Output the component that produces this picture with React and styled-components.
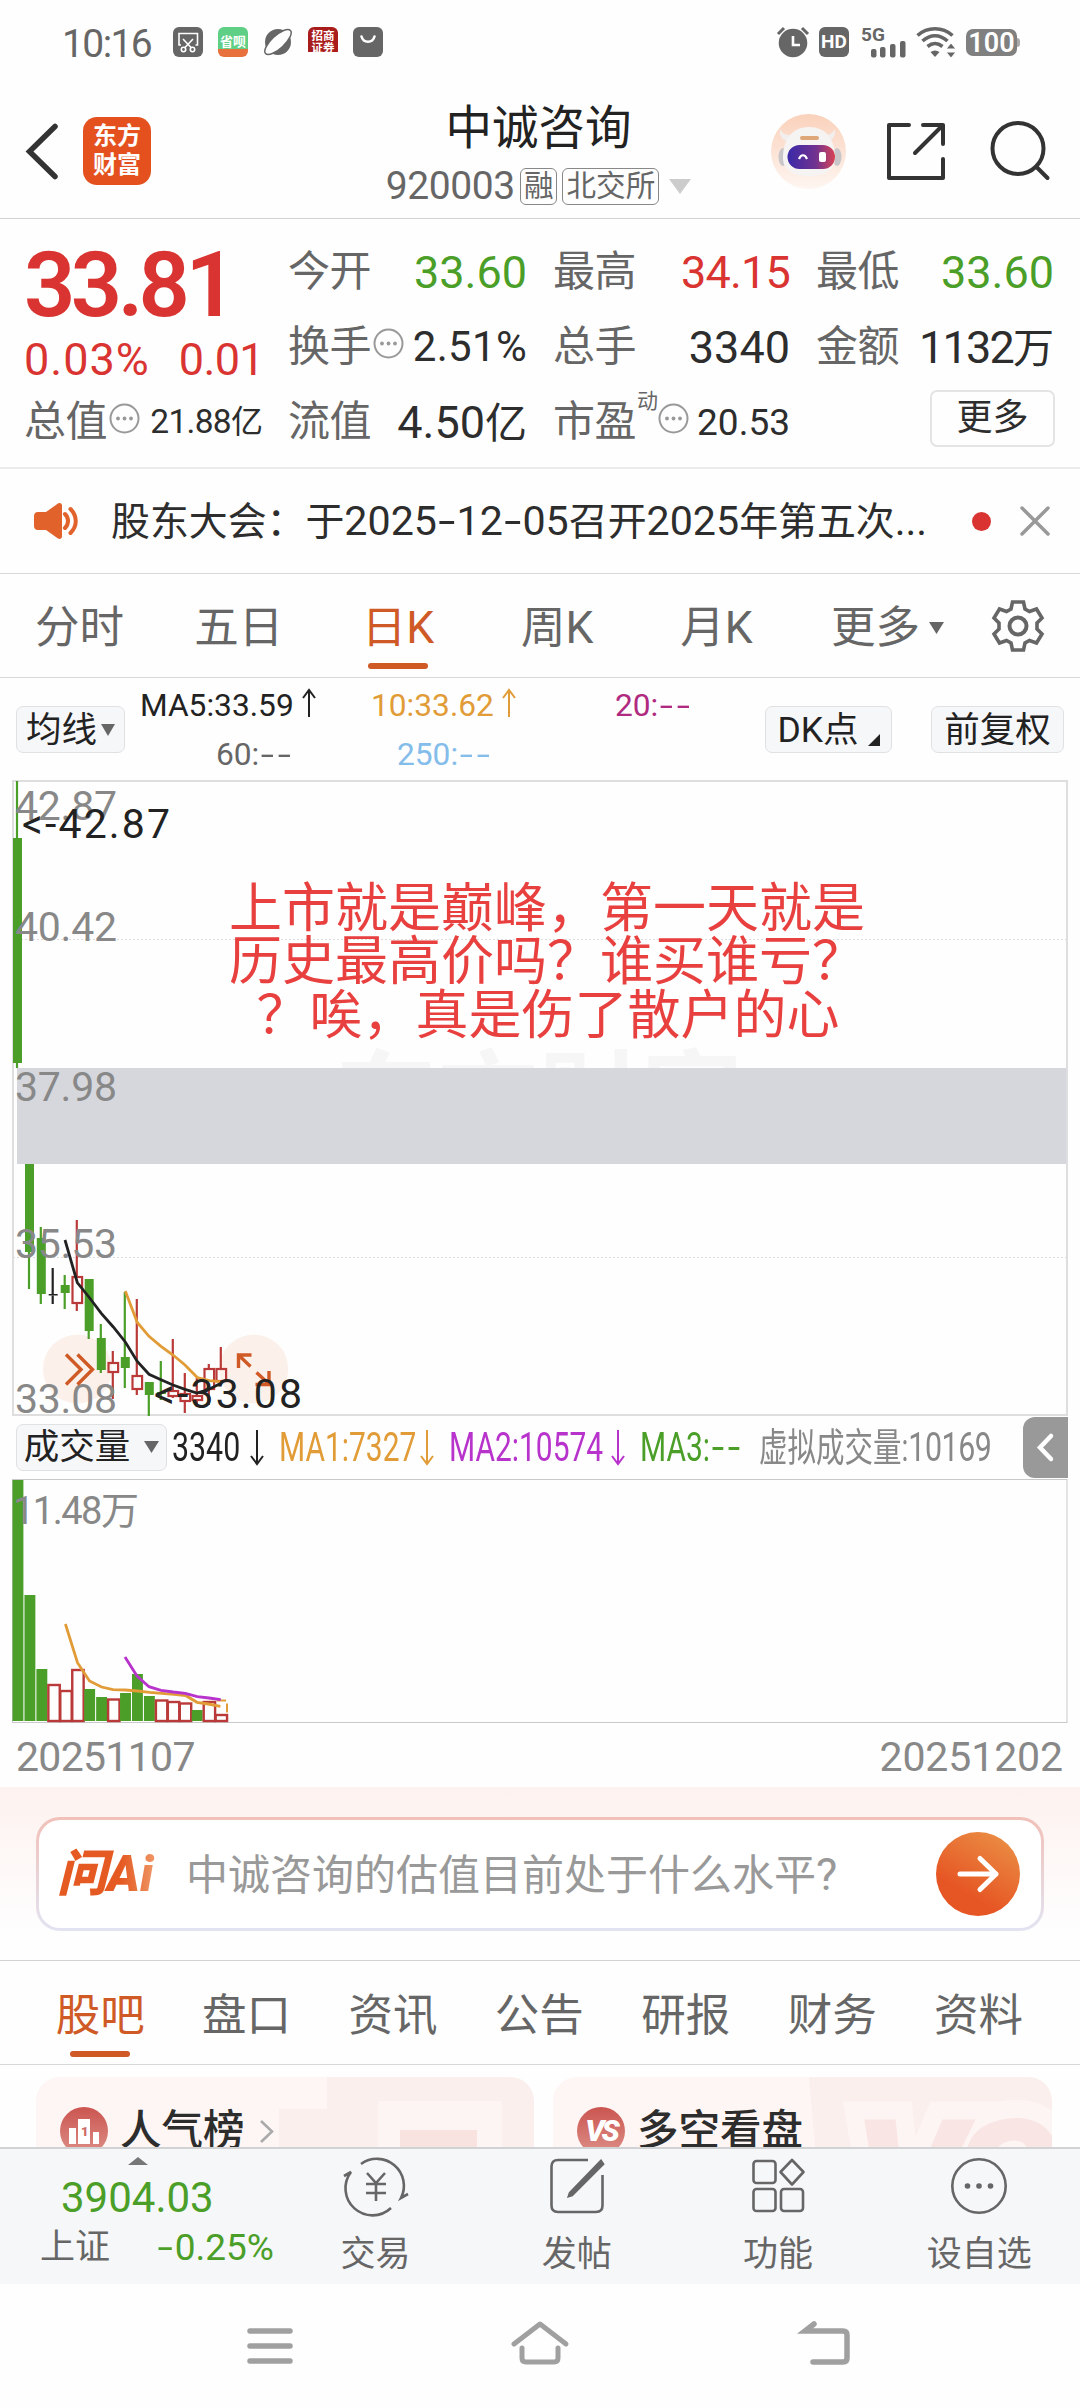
import React from 'react';
import styled, {createGlobalStyle} from 'styled-components';

const GREEN = '#4b9f28';
const RED = '#d93431';
const CANDLE_RED = '#b93a38';
const ORANGE = '#cf5a26';
const YELLOW = '#e19c37';

const GlobalStyle = createGlobalStyle`
  * {
    box-sizing: border-box;
  }
  body {
    margin: 0;
    background: #fefefe;
    color: #2d2d2d;
    font-family: Roboto, 'Noto Sans CJK SC', sans-serif;
  }
`;

const Page = styled.div`
  width: 1080px;
  height: 2408px;
  display: flex;
  flex-direction: column;
  overflow: hidden;
  line-height: 1;
  white-space: nowrap;
`;

const Icon = styled.svg`
  display: block;
  flex: none;
  overflow: visible;
  fill: none;
  margin-left: ${p => p.$left || 0}px;
  margin-top: ${p => p.$top || 0}px;
`;

/* text with its own size, tracking and colour */
const Text = styled.span`
  font-size: ${p => p.$size}px;
  letter-spacing: ${p => p.$track || 0}px;
  color: ${p => p.$color || 'inherit'};
`;

/* wide hyphen of the number font */
const Dash = styled.span`
  display: inline-block;
  margin: 0 ${p => p.$gap || 0.13}em;
  transform: scaleX(1.5);
`;

/* ---------- status bar ---------- */

const StatusBar = styled.div`
  flex: 0 0 84px;
  padding: 0 60px 0 62px;
  display: flex;
  align-items: center;
  justify-content: space-between;
  color: #666;
`;

const StatusGroup = styled.div`
  display: flex;
  align-items: center;
  gap: ${p => p.$gap}px;
`;

const Clock = styled.div`
  width: 96px;
  font-size: 39px;
  letter-spacing: -1.6px;
  padding-top: 4px;
`;

const AppBadge = styled.div`
  width: 30px;
  height: 30px;
  border-radius: 6px;
  overflow: hidden;
  background: ${p => p.$bg};
  color: #fff;
  display: flex;
  flex-direction: column;
  align-items: center;
  justify-content: center;
  font-size: ${p => p.$size}px;
  line-height: 12px;
  font-weight: 700;
`;

const Battery = styled.div`
  width: 51px;
  height: 27px;
  border-radius: 7px;
  background: #808080;
  color: #fff;
  font-size: 27px;
  font-weight: 600;
  line-height: 28px;
  text-align: center;
`;

const BatteryTip = styled.div`
  width: 3px;
  height: 9px;
  margin-left: -10px;
  border-radius: 0 3px 3px 0;
  background: #aaa;
`;

/* ---------- header ---------- */

const Header = styled.div`
  flex: 0 0 135px;
  padding: 0 30px 0 27px;
  display: grid;
  grid-template-columns: 280px 1fr 280px;
  border-bottom: 1px solid #d2d2d2;
`;

const HeaderLeft = styled.div`
  display: flex;
  align-items: flex-start;
  padding-top: 33px;
  gap: 25px;
`;

const Logo = styled.div`
  width: 68px;
  height: 68px;
  border-radius: 14px;
  background: #e4511f;
  color: #fff;
  font-size: 24px;
  line-height: 29px;
  font-weight: 700;
  text-align: center;
  padding-top: 5px;
`;

const HeaderTitle = styled.div`
  display: flex;
  flex-direction: column;
  align-items: center;
  padding-top: 19px;
`;

const StockName = styled.div`
  font-size: 46.5px;
  line-height: 50px;
  color: #222;
`;

const StockCode = styled.div`
  display: flex;
  align-items: center;
  height: 38px;
  margin-top: 14px;
  color: #666;
`;

const Tag = styled.div`
  height: 37px;
  padding: 0 3px;
  margin-left: 5px;
  border: 1px solid #888;
  border-radius: 6px;
  font-size: 29.6px;
  line-height: 34px;
`;

const HeaderRight = styled.div`
  display: flex;
  justify-content: flex-end;
  padding-top: 30px;
`;

/* ---------- quote ---------- */

const Quote = styled.div`
  flex: 0 0 250px;
  display: flex;
  padding: 18px 0 0 24px;
  border-bottom: 2px solid #ebebeb;
`;

const PriceColumn = styled.div`
  flex: 0 0 264px;
  display: flex;
  flex-direction: column;
`;

const Price = styled.div`
  height: 96px;
  padding-top: 3px;
  font-size: 90px;
  line-height: 91px;
  font-weight: 600;
  letter-spacing: -4.6px;
  color: ${RED};
`;

const Change = styled.div`
  height: 54px;
  display: flex;
  align-items: flex-start;
  padding-top: 4px;
  gap: 29px;
  color: ${RED};
`;

const StatGrid = styled.div`
  display: grid;
  grid-template-columns: 239px 237px 238px;
  grid-auto-rows: 75px;
  column-gap: 26px;
`;

const Stat = styled.div`
  height: 70px;
  display: flex;
  align-items: center;
  justify-content: space-between;
  width: ${p => p.$width || 'auto'};
`;

const StatLabel = styled.div`
  display: flex;
  align-items: center;
  gap: 2px;
  font-size: 42px;
  line-height: 50px;
  letter-spacing: -0.5px;
  color: #666;
`;

const Superscript = styled.span`
  align-self: flex-start;
  font-size: 21px;
  line-height: 22px;
  margin: -7px -2px 0 -1px;
`;

const MoreButton = styled.div`
  width: 125px;
  height: 57px;
  margin: 3px 0 0 114px;
  border: 2px solid #e4e4e4;
  border-radius: 7px;
  text-align: center;
  font-size: 36px;
  line-height: 53px;
`;

/* ---------- notice ---------- */

const Notice = styled.div`
  flex: 0 0 105px;
  display: flex;
  align-items: center;
  padding: 0 31px 0 34px;
  border-bottom: 1px solid #d8d8d8;
`;

const NoticeText = styled.div`
  flex: 1;
  margin-left: 32px;
  font-size: 38.9px;
  line-height: 50px;
`;

const Dot = styled.div`
  width: 19px;
  height: 19px;
  border-radius: 50%;
  background: ${RED};
  margin-right: 30px;
`;

/* ---------- tabs ---------- */

const Tabs = styled.div`
  flex: 0 0 104px;
  display: flex;
  padding-left: ${p => p.$start}px;
  border-bottom: 1px solid #d8d8d8;
`;

const Tab = styled.div`
  width: ${p => p.$width}px;
  padding-top: ${p => p.$top || 31}px;
  display: flex;
  flex-direction: column;
  align-items: center;
  font-size: 44.5px;
  line-height: 46px;
  color: ${p => (p.$active ? ORANGE : '#666')};

  &::after {
    content: '';
    width: 60px;
    height: 6px;
    margin-top: 12px;
    border-radius: 3px;
    background: ${p => (p.$active ? ORANGE : 'transparent')};
  }
`;

const Inline = styled.div`
  display: flex;
  align-items: center;
  gap: ${p => p.$gap || 0}px;
  margin-left: ${p => p.$left || 0}px;
`;

/* ---------- indicators ---------- */

const MaBar = styled.div`
  flex: 0 0 103px;
  height: 103px;
  display: flex;
  padding: 28px 16px 0;
`;

const ToolButton = styled.div`
  flex: none;
  width: ${p => p.$width}px;
  height: 47px;
  margin-left: ${p => p.$left || 0}px;
  display: flex;
  align-items: center;
  justify-content: center;
  gap: ${p => p.$gap || 0}px;
  border: 1px solid #dfe1e3;
  border-radius: 7px;
  background: #f6f7f9;
  color: #222;
  font-size: 35.5px;
  line-height: 40px;
`;

const MaGrid = styled.div`
  flex: 1;
  margin: -17px 0 0 15px;
  display: grid;
  grid-template-columns: 209px 209px 1fr;
  grid-template-rows: 49px 36px;
`;

const MaValue = styled.div`
  display: flex;
  align-items: flex-start;
  gap: 8px;
  padding-left: ${p => p.$indent || 0}px;
  font-size: 31.7px;
  line-height: 34px;
  color: ${p => p.$color};
`;

const VolumeBar = styled.div`
  flex: 0 0 64px;
  display: flex;
  align-items: center;
  padding: 0 12px 0 16px;
`;

const VolumeItem = styled.div`
  flex: 0 0 ${p => p.$width}px;
  margin-left: ${p => p.$left || 0}px;
  display: flex;
  align-items: center;
  color: ${p => p.$color};
`;

const Condensed = styled.span`
  flex: 0 0 ${p => p.$width}px;
  width: ${p => p.$width}px;
  font-size: ${p => p.$size || 41}px;
  line-height: 44px;
  transform: scaleX(${p => p.$scale || 0.74});
  transform-origin: 0 50%;
`;

const Collapse = styled.div`
  width: 45px;
  height: 61px;
  margin-left: auto;
  border-radius: 12px 0 0 12px;
  background: #999;
  display: flex;
  align-items: center;
  justify-content: center;
`;

const DateRow = styled.div`
  flex: 0 0 64px;
  display: flex;
  justify-content: space-between;
  padding: 12px 17px 0 16px;
  line-height: 44px;
  color: #888;
`;

/* ---------- ask AI ---------- */

const AskSection = styled.div`
  flex: 0 0 174px;
  padding: 30px 36px 0;
  background: linear-gradient(#fdf2ef, #fefefe 85%);
  border-bottom: 1px solid #d2d2d2;
`;

const AskBox = styled.div`
  height: 114px;
  display: flex;
  align-items: center;
  padding: 0 21px 0 18px;
  border: 3px solid transparent;
  border-radius: 24px;
  background: linear-gradient(#fff, #fff) padding-box, linear-gradient(#f1c0b8, #e2e4f2) border-box;
`;

const AskLogo = styled.div`
  width: 129px;
  font-size: 50px;
  line-height: 60px;
  font-weight: 900;
  font-style: italic;
  color: transparent;
  background: linear-gradient(90deg, #e55a22 50%, #f0a070 80%);
  background-clip: text;
`;

const AskHint = styled.div`
  flex: 1;
  padding-top: 3px;
  font-size: 42px;
  line-height: 50px;
  color: #999;
`;

const SendButton = styled.div`
  width: 84px;
  height: 84px;
  border-radius: 50%;
  background: linear-gradient(30deg, #e65624 30%, #eb9548);
  display: flex;
  align-items: center;
  justify-content: center;
`;

/* ---------- cards ---------- */

const Cards = styled.div`
  flex: 0 0 82px;
  overflow: hidden;
  display: grid;
  grid-template-columns: 498px 499px;
  gap: 19px;
  padding: 12px 28px 0 36px;
`;

const Card = styled.div`
  height: 160px;
  border-radius: 24px;
  overflow: hidden;
  background: #fdf6f4;
  display: grid;
`;

const CardArt = styled.svg`
  grid-area: 1 / 1;
  display: block;
`;

const CardTitle = styled.div`
  grid-area: 1 / 1;
  display: flex;
  align-items: center;
  height: 48px;
  margin: 30px 0 0 24px;
  font-size: 41.5px;
  font-weight: 500;
  line-height: 48px;
`;

const CardIcon = styled.div`
  width: 48px;
  height: 48px;
  margin-right: 12px;
  border-radius: 50%;
  background: linear-gradient(#cb5550, #dd8f88);
  color: #fff;
  font-size: 30px;
  font-style: italic;
  font-weight: 900;
  letter-spacing: -3px;
  display: flex;
  align-items: center;
  justify-content: center;
`;

/* ---------- bottom bars ---------- */

const BottomNav = styled.div`
  flex: 0 0 137px;
  display: flex;
  background: #f6f7f9;
  border-top: 2px solid #d0d2d4;
`;

const IndexTicker = styled.div`
  width: 275px;
  padding: 8px 0 0 40px;
`;

const IndexRow = styled.div`
  display: flex;
  align-items: center;
  justify-content: space-between;
  height: 50px;
  color: ${GREEN};
  padding: ${p => p.$pad || 0};
`;

const NavItem = styled.div`
  width: 201.4px;
  display: flex;
  flex-direction: column;
  align-items: center;
  font-size: 35px;
  line-height: 40px;
  color: #666;
  padding-top: 8px;
  gap: 20px;
`;

const SystemNav = styled.div`
  flex: 1;
  display: flex;
  padding: 36px 0 0 247px;
`;

const Bubble = () => (
  <Icon width="31" height="31" viewBox="0 0 31 31" $top={-8}>
    <circle cx="15.5" cy="15.5" r="14" stroke="#999" strokeWidth="2" />
    <g fill="#999">
      <circle cx="9" cy="15.5" r="1.9" />
      <circle cx="15.5" cy="15.5" r="1.9" />
      <circle cx="22" cy="15.5" r="1.9" />
    </g>
  </Icon>
);

const Arrow = ({down, height = 28}) => (
  <Icon width="14" height={height} viewBox={`0 0 14 ${height}`} stroke="currentColor" strokeWidth="2">
    <path d={down ? `M7 0V${height - 1}M1 ${height - 9}l6 8 6-8` : `M7 ${height}V1M1 9l6-8 6 8`} />
  </Icon>
);

const Triangle = ({width, height, color = '#666', up}) => (
  <Icon width={width} height={height}>
    <path d={up ? `M0 ${height}h${width}L${width / 2} 0z` : `M0 0h${width}L${width / 2} ${height}z`} fill={color} />
  </Icon>
);

/* [center x, high, body top, body bottom, low, colour] */
const candles = [
  [17.5, 780, 837, 1062, 1067, 'g'],
  [29.5, 1163, 1163, 1251, 1288, 'g'],
  [41.3, 1226, 1237, 1293, 1303, 'g'],
  [53.2, 1267, 1293, 1294.5, 1303, 'k'],
  [65.2, 1274, 1284, 1292, 1308, 'g'],
  [77.3, 1219, 1276, 1302, 1310, 'r'],
  [89.2, 1278, 1278, 1330, 1338, 'g'],
  [101.3, 1323, 1337, 1369, 1372, 'g'],
  [113.3, 1350, 1362, 1371, 1398, 'r'],
  [125.3, 1291, 1356, 1367, 1387, 'g'],
  [137.3, 1298, 1375, 1388, 1394, 'r'],
  [149.3, 1381, 1381, 1394, 1415, 'g'],
  [161.3, 1360, 1391, 1393, 1399, 'g'],
  [173.3, 1338, 1390, 1395, 1397, 'r'],
  [185.3, 1372, 1393, 1400, 1412, 'r'],
  [197.3, 1377, 1395, 1399, 1406, 'r'],
  [209.3, 1363, 1368, 1388, 1404, 'r'],
  [221.3, 1346, 1368, 1380, 1380, 'r']
];

const axisLabels = [
  ['42.87', 819],
  ['40.42', 940],
  ['37.98', 1100],
  ['35.53', 1257],
  ['33.08', 1412]
];

const Candle = ({data: [x, high, top, bottom, low, type]}) => {
  const color = {g: GREEN, r: CANDLE_RED, k: '#222'}[type];
  return (
    <g stroke={color} strokeWidth="2.2">
      {high < top && <line x1={x - 0.5} x2={x - 0.5} y1={high} y2={top} />}
      {low > bottom && <line x1={x - 0.5} x2={x - 0.5} y1={bottom} y2={low} />}
      {type === 'r'
        ? <rect x={x - 4.8} y={top} width="9.6" height={bottom - top} fill="none" />
        : <rect x={x - 4.5} y={top} width="9" height={bottom - top} fill={color} stroke="none" />}
    </g>
  );
};

const KLineChart = () => (
  <Icon width="1080" height="634" viewBox="0 780 1080 634">
    <rect x="13" y="780" width="1054" height="634" stroke="#dedede" strokeWidth="2" />
    <g stroke="#dcdcdc" strokeDasharray="2 2">
      <line x1="13" x2="1066" y1="938.5" y2="938.5" />
      <line x1="13" x2="1066" y1="1256.5" y2="1256.5" />
    </g>
    <text x="335" y="1135" fontSize="102" fontWeight="700" fill="#f6f6f7">东方财富</text>
    <g fill="#fbf0ea">
      <circle cx="77.5" cy="1368" r="34.5" />
      <circle cx="253.7" cy="1368" r="34.5" />
    </g>
    {candles.map((item, index) => <Candle key={index} data={item} />)}
    <rect x="17" y="1067" width="1049" height="96" fill="#d5d7dc" />
    <g fontSize="41" fill="#888">
      {axisLabels.map(([label, y]) => <text key={label} x="15" y={y} textLength="102">{label}</text>)}
    </g>
    <g stroke={ORANGE} strokeWidth="3.4">
      <path d="M66 1353.5l15 15-15 15M77.5 1353.5l15 15-15 15" />
      <path d="M251.5 1354h-13v13M239 1354.5l11.5 11M255.5 1383.5h13.5v-13.5M269 1383l-12.5-11.5" />
    </g>
    <polyline
      stroke="#222"
      strokeWidth="2.8"
      points="65,1239 77.3,1281.5 89.3,1296.5 101.3,1312.3 113.3,1326 125.3,1341 137.3,1360.5 149,1373.3 161,1378.7 173,1384 185,1388.3 197,1392 209,1388.3 221.5,1382"
    />
    <polyline
      stroke={YELLOW}
      strokeWidth="2.8"
      points="125.3,1290 137.3,1321.5 149,1335.3 161,1345.3 173,1354 185,1364 197.3,1376.5 209.3,1379.7 220.5,1380.7"
    />
    <g fontSize="41" fill="#222">
      <text x="22" y="837" textLength="148">&lt;-42.87</text>
      <text x="154" y="1407" textLength="148">&lt;-33.08</text>
    </g>
    <g fontSize="53" fill="#e8403f" textAnchor="middle">
      <text x="547" y="926">上市就是巅峰，第一天就是</text>
      <text x="547" y="979">历史最高价吗？谁买谁亏？</text>
      <text x="548" y="1033">？唉，真是伤了散户的心</text>
    </g>
  </Icon>
);

const volumes = [
  [1479, 'g'], [1594, 'g'], [1668, 'g'], [1684, 'r'], [1690, 'r'], [1669, 'r'],
  [1688, 'g'], [1696, 'g'], [1698.5, 'r'], [1692, 'g'], [1673, 'g'], [1695, 'g'],
  [1699.5, 'r'], [1701, 'r'], [1702.5, 'r'], [1709, 'g'], [1701, 'r'], [1714, 'r']
];

const VolumeChart = () => (
  <Icon width="1080" height="244" viewBox="0 1478 1080 244">
    <rect x="12.5" y="1478.5" width="1054.5" height="243" stroke="#c9c9c9" />
    {volumes.map(([top, type], index) => {
      const x = 12.5 + index * 11.95;
      return type === 'g'
        ? <rect key={index} x={x} y={top} width="10.9" height={1720 - top} fill={GREEN} />
        : <rect key={index} x={x} y={top} width="11.4" height={1720 - top} stroke={CANDLE_RED} strokeWidth="2.4" />;
    })}
    <path d="M217 1699.5h10v12" stroke={YELLOW} strokeWidth="2" strokeDasharray="9 4" />
    <polyline
      stroke={YELLOW}
      strokeWidth="2.8"
      points="65.4,1623 77.5,1661.7 89.5,1680 101.6,1686 113,1688.7 125,1689 137.7,1690 149.8,1691.3 161.8,1692.3 174,1693.3 186,1694.7 197,1701.3 208.3,1703 220.4,1705.3"
    />
    <polyline
      stroke="#b733cc"
      strokeWidth="2.8"
      points="125,1656 137,1675 149,1685.7 161,1689.3 173.2,1691 185.3,1692.3 197.3,1695.7 209,1697 220.7,1698.7"
    />
    <text x="13" y="1522.5" fontSize="38" fill="#888" textLength="126">11.48万</text>
  </Icon>
);

const App = () => (
  <Page>
    <GlobalStyle />
    <StatusBar>
      <StatusGroup $gap={15}>
        <Clock>10:16</Clock>
        <AppBadge $bg="#666">
          <Icon width="30" height="30" stroke="#fff" strokeWidth="1.6">
            <path d="M8 18H6V6.5h18.5V18h-2M10 12l8.5 9M20 12l-8.5 9" />
            <circle cx="10.5" cy="22.5" r="2.2" />
            <circle cx="19.5" cy="22.5" r="2.2" />
          </Icon>
        </AppBadge>
        <AppBadge $bg="linear-gradient(#5fcf86 72%, #e8703c 72%)" $size={13}>
          <span>省呗</span>
        </AppBadge>
        <Icon width="30" height="30">
          <circle cx="15" cy="15" r="13" fill="#666" />
          <ellipse cx="15" cy="15" rx="17" ry="6.5" transform="rotate(-43 15 15)" fill="#fefefe" stroke="#666" strokeWidth="1.5" />
        </Icon>
        <AppBadge $bg="linear-gradient(#a91c1c 85%, #fff 85%)" $size={11.5}>
          <span>招商</span>
          <span>证券</span>
        </AppBadge>
        <AppBadge $bg="#666">
          <Icon width="30" height="30" stroke="#fff" strokeWidth="2.6" strokeLinecap="round">
            <path d="M8.5 9.5c2 7 11 7 13 0" />
          </Icon>
        </AppBadge>
      </StatusGroup>
      <StatusGroup $gap={10}>
        <Icon width="32" height="30">
          <circle cx="16" cy="16" r="14.3" fill="#666" />
          <path d="M1 7l6-6M31 7l-6-6" stroke="#666" strokeWidth="3" />
          <path d="M16 9v9h7" stroke="#fff" strokeWidth="2.6" />
        </Icon>
        <AppBadge $bg="#666" $size={19}>HD</AppBadge>
        <Icon width="47" height="30">
          <text x="2" y="14" fontSize="19" fontWeight="700" fill="#666">5G</text>
          <g fill="#666">
            <rect x="12" y="22" width="5.5" height="8.5" rx="2" />
            <rect x="21" y="20" width="5.5" height="10.5" rx="2" />
            <rect x="31" y="17" width="5.5" height="13.5" rx="2" />
            <rect x="41" y="14" width="5.5" height="16.5" rx="2" />
          </g>
        </Icon>
        <Icon width="40" height="30" stroke="#666" strokeWidth="3.6">
          <path d="M1.5 8.5c10-9 25-9 35 0M6.5 14c8-7 17-7 25 0M11.5 19.5c5-4 10-4 15 0" />
          <path d="M14.5 25l4.5 5 4.5-5c-3-2-6-2-9 0z" fill="#666" stroke="none" />
          <path d="M35 16l5 6H30zM30 25h10l-5 6z" fill="#666" stroke="#fefefe" strokeWidth="1" />
        </Icon>
        <Battery>100</Battery>
        <BatteryTip />
      </StatusGroup>
    </StatusBar>

    <Header>
      <HeaderLeft>
        <Icon width="31" height="68" stroke="#333" strokeWidth="5.5" strokeLinecap="round">
          <path d="M28 9.5L2.5 34.5 28 59.5" />
        </Icon>
        <Logo>
          <div>东方</div>
          <div>财富</div>
        </Logo>
      </HeaderLeft>
      <HeaderTitle>
        <StockName>中诚咨询</StockName>
        <StockCode>
          <Text $size={39} $track={-0.4}>920003</Text>
          <Tag>融</Tag>
          <Tag>北交所</Tag>
          <Inline $left={10}>
            <Triangle width={22} height={15} color="#ccc" />
          </Inline>
        </StockCode>
      </HeaderTitle>
      <HeaderRight>
        <Icon width="75" height="75" viewBox="0 0 75 75">
          <defs>
            <linearGradient id="avatarBg" x1="0" y1="0" x2="0" y2="1">
              <stop offset="0" stopColor="#fad1bb" />
              <stop offset="1" stopColor="#fef6f1" />
            </linearGradient>
            <linearGradient id="visor">
              <stop offset="0" stopColor="#3a2aa8" />
              <stop offset="0.6" stopColor="#71328f" />
              <stop offset="1" stopColor="#d94355" />
            </linearGradient>
          </defs>
          <circle cx="37.5" cy="37.5" r="37.5" fill="url(#avatarBg)" />
          <ellipse cx="12" cy="43" rx="4.500" ry="9" fill="#c9c6c9" />
          <ellipse cx="66" cy="43" rx="4.500" ry="9" fill="#c9c6c9" />
          <path d="M9 15c-1 6 2 12 8 12l7-7c-7 2-12 1-15-5zM64 15c1 6-2 12-8 12l-7-7c7 2 12 1 15-5z" fill="#f3eeee" />
          <path d="M12 44c0-20 10-31 26-31s26 11 26 31c0 12-10 18-26 18s-26-6-26-18z" fill="#f6f3f3" />
          <rect x="29" y="22" width="19" height="4" rx="2" fill="#dfa678" />
          <rect x="16.5" y="31" width="47.5" height="24" rx="12" fill="url(#visor)" />
          <path d="M28 45c2-5 6-5 8 0" stroke="#fff" strokeWidth="2.2" />
          <rect x="48" y="38" width="7" height="10" rx="2" fill="#fff" />
        </Icon>
        <Icon width="58" height="75" viewBox="0 0 58 75" stroke="#333" strokeWidth="4" strokeLinecap="round" strokeLinejoin="round" $left={41}>
          <path d="M22 11H2v53h54V45M36 11h20v19M56 11L28 39" />
        </Icon>
        <Icon width="60" height="75" viewBox="0 0 60 75" stroke="#333" strokeWidth="4" strokeLinecap="round" $left={45}>
          <circle cx="28" cy="34.5" r="25.5" />
          <path d="M46.5 53L57.5 64" />
        </Icon>
      </HeaderRight>
    </Header>

    <Quote>
      <PriceColumn>
        <Price>33.81</Price>
        <Change>
          <Text $size={45} $track={1}>0.03%</Text>
          <Text $size={45} $track={-0.6}>0.01</Text>
        </Change>
        <Stat $width="239px">
          <StatLabel>总值<Bubble /></StatLabel>
          <span>
            <Text $size={33.5} $track={-0.7}>21.88</Text>
            <Text $size={32}>亿</Text>
          </span>
        </Stat>
      </PriceColumn>
      <StatGrid>
        <Stat>
          <StatLabel>今开</StatLabel>
          <Text $size={45} $color={GREEN}>33.60</Text>
        </Stat>
        <Stat>
          <StatLabel>最高</StatLabel>
          <Text $size={45} $track={-0.8} $color={RED}>34.15</Text>
        </Stat>
        <Stat>
          <StatLabel>最低</StatLabel>
          <Text $size={45} $color={GREEN}>33.60</Text>
        </Stat>
        <Stat>
          <StatLabel>换手<Bubble /></StatLabel>
          <Text $size={42} $track={0.3}>2.51%</Text>
        </Stat>
        <Stat>
          <StatLabel>总手</StatLabel>
          <Text $size={45}>3340</Text>
        </Stat>
        <Stat>
          <StatLabel>金额</StatLabel>
          <span>
            <Text $size={45} $track={-1.8}>1132</Text>
            <Text $size={41}>万</Text>
          </span>
        </Stat>
        <Stat>
          <StatLabel>流值</StatLabel>
          <span>
            <Text $size={45}>4.50</Text>
            <Text $size={42}>亿</Text>
          </span>
        </Stat>
        <Stat>
          <StatLabel>市盈<Superscript>动</Superscript><Bubble /></StatLabel>
          <Text $size={37}>20.53</Text>
        </Stat>
        <MoreButton>更多</MoreButton>
      </StatGrid>
    </Quote>

    <Notice>
      <Icon width="45" height="38" viewBox="0 0 45 38">
        <path d="M4 10h8L24 1.5c2-1 4 0 4 2v31c0 2-2 3-4 2L12 28H4c-3 0-4-2-4-4V14c0-2 1-4 4-4z" fill="#e2622b" />
        <path d="M31 12c4 4 4 10 0 14M36.5 7c7 7 7 17 0 24" stroke="#e2622b" strokeWidth="4" strokeLinecap="round" />
      </Icon>
      <NoticeText>
        股东大会：于<Text $size={41.2}>2025<Dash $gap={0.1}>-</Dash>12<Dash $gap={0.1}>-</Dash>05</Text>召开<Text $size={41.2}>2025</Text>年第五次<Text $size={41}>...</Text>
      </NoticeText>
      <Dot />
      <Icon width="28" height="28" stroke="#999" strokeWidth="3.5" strokeLinecap="round">
        <path d="M1 1l26 26M27 1L1 27" />
      </Icon>
    </Notice>

    <Tabs $start={0}>
      <Tab $width={159.2}>分时</Tab>
      <Tab $width={159.2}>五日</Tab>
      <Tab $width={159.2} $active>日K</Tab>
      <Tab $width={159.2}>周K</Tab>
      <Tab $width={159.2}>月K</Tab>
      <Tab $width={183}>
        <Inline $gap={9}>更多<Triangle width={15} height={12} /></Inline>
      </Tab>
      <Icon width="52" height="52" viewBox="0 0 52 52" stroke="#666" strokeWidth="4" $top={26} $left={13}>
        <path d="M20.5 2h11l1.5 7 4.500 2.500 7-2.500 5.500 9-5 5v6l5 5-5.500 9-7-2.500L33 43l-1.500 7h-11L19 43l-4.500-2.500-7 2.500L2 34l5-5v-6l-5-5 5.500-9 7 2.500L19 9z" strokeWidth="3.6" />
        <circle cx="26" cy="26" r="8.5" />
      </Icon>
    </Tabs>

    <MaBar>
      <ToolButton $width={109} $gap={4}>均线<Triangle width={14} height={12} /></ToolButton>
      <MaGrid>
        <MaValue $color="#222">MA5:33.59<Arrow /></MaValue>
        <MaValue $color={YELLOW} $indent={22}>10:33.62<Arrow /></MaValue>
        <MaValue $color="#b02a80" $indent={57}><span>20:<Dash>-</Dash><Dash>-</Dash></span></MaValue>
        <MaValue $color="#666" $indent={76}><span>60:<Dash>-</Dash><Dash>-</Dash></span></MaValue>
        <MaValue $color="#84bdea" $indent={48}><span>250:<Dash>-</Dash><Dash>-</Dash></span></MaValue>
      </MaGrid>
      <ToolButton $width={127} $gap={9}>
        DK点
        <Icon width="12" height="12" $top={20}><path d="M12 0v12H0z" fill="#222" /></Icon>
      </ToolButton>
      <ToolButton $width={133} $left={39}>前复权</ToolButton>
    </MaBar>

    <KLineChart />

    <VolumeBar>
      <ToolButton $width={151} $gap={14}>成交量<Triangle width={15} height={12} /></ToolButton>
      <VolumeItem $width={107} $left={5} $color="#222">
        <Condensed $width={78}>3340</Condensed><Arrow down height={35} />
      </VolumeItem>
      <VolumeItem $width={170} $color={YELLOW}>
        <Condensed $width={141} $scale={0.73}>MA1:7327</Condensed><Arrow down height={35} />
      </VolumeItem>
      <VolumeItem $width={191} $color="#b733cc">
        <Condensed $width={162} $scale={0.73}>MA2:10574</Condensed><Arrow down height={35} />
      </VolumeItem>
      <VolumeItem $width={119} $color={GREEN}>
        <Condensed $width={100} $scale={0.73}>MA3:<Dash>-</Dash><Dash>-</Dash></Condensed>
      </VolumeItem>
      <VolumeItem $width={235} $color="#888">
        <Condensed $width={232} $size={38.5} $scale={0.74}>虚拟成交量:<Text $size={41} $track={-0.6}>10169</Text></Condensed>
      </VolumeItem>
      <Collapse>
        <Icon width="15" height="27" stroke="#fff" strokeWidth="4.5" strokeLinecap="round">
          <path d="M13 2L2 13.5 13 25" />
        </Icon>
      </Collapse>
    </VolumeBar>

    <VolumeChart />

    <DateRow>
      <Text $size={41} $track={-0.7}>20251107</Text>
      <Text $size={41} $track={-0.1}>20251202</Text>
    </DateRow>

    <AskSection>
      <AskBox>
        <AskLogo>问Ai</AskLogo>
        <AskHint>中诚咨询的估值目前处于什么水平<Text $size={45}>?</Text></AskHint>
        <SendButton>
          <Icon width="42" height="36" stroke="#fff" strokeWidth="5" strokeLinecap="round" strokeLinejoin="round">
            <path d="M3 18h36M23 2.5L39 18 23 33.5" />
          </Icon>
        </SendButton>
      </AskBox>
    </AskSection>

    <Tabs $start={27}>
      {['股吧', '盘口', '资讯', '公告', '研报', '财务', '资料'].map((name, index) => (
        <Tab key={name} $width={146.4} $top={32} $active={index === 0}>{name}</Tab>
      ))}
    </Tabs>

    <Cards>
      <Card>
        <CardArt width="498" height="160">
          <path d="M291 0h207v160H243V32h48z" fill="#fbefed" />
          <rect x="342" y="24" width="124" height="136" fill="#fdf5f3" />
          <rect x="364" y="53" width="77" height="107" fill="#f9e3e1" />
        </CardArt>
        <CardTitle>
          <CardIcon>
            <Icon width="30" height="25">
              <path d="M0 9h7v16H0zM9 0h12v25H9zM24 13h6v12h-6z" fill="#fff" />
              <text x="12" y="17" fontSize="13" fontStyle="normal" fill="#cf6a64">1</text>
            </Icon>
          </CardIcon>
          人气榜
          <Icon width="13" height="23" stroke="#aaa" strokeWidth="2.6" $left={15}>
            <path d="M1 1l11 10.5L1 22" />
          </Icon>
        </CardTitle>
      </Card>
      <Card>
        <CardArt width="499" height="160">
          <path d="M256 0h243v160H270z" fill="#fbefed" />
          <text x="300" y="165" fontSize="172" fontWeight="900" fontStyle="italic" letterSpacing="-12" fill="#f9e5e3" stroke="#fdf5f3" strokeWidth="36" paintOrder="stroke">VS</text>
        </CardArt>
        <CardTitle>
          <CardIcon>VS</CardIcon>
          多空看盘
        </CardTitle>
      </Card>
    </Cards>

    <BottomNav>
      <IndexTicker>
        <Inline $left={88}><Triangle width={20} height={8} up color="#777" /></Inline>
        <IndexRow $pad="15px 0 0 21px"><Text $size={42}>3904.03</Text></IndexRow>
        <IndexRow $pad="15px 1px 0 0">
          <Text $size={35} $color="#666">上证</Text>
          <Text $size={37}><Dash>-</Dash>0.25%</Text>
        </IndexRow>
      </IndexTicker>
      <NavItem>
        <Icon width="64" height="58" viewBox="0 0 64 58" stroke="#666" strokeWidth="2.6">
          <path d="M17 7A27 27 0 0 1 57 41l7-4M47 51A27 27 0 0 1 7 15L0 19" />
          <path d="M23 16l9 10 9-10M32 26v18M22 27h20M22 36h20" />
        </Icon>
        交易
      </NavItem>
      <NavItem>
        <Icon width="54" height="58" viewBox="0 0 54 58" stroke="#666" strokeWidth="2.6">
          <path d="M38 3H8Q1.5 3 1.5 9.5v39Q1.5 55 8 55h38q6.5 0 6.5-6.5V18" />
          <path d="M51 4L20 36l-1 3 3-1L53 7z" fill="#666" />
        </Icon>
        发帖
      </NavItem>
      <NavItem>
        <Icon width="52" height="58" viewBox="0 0 52 58" stroke="#666" strokeWidth="2.6">
          <rect x="1.5" y="4" width="22" height="22" rx="3" />
          <rect x="1.5" y="32" width="22" height="22" rx="3" />
          <rect x="29" y="32" width="22" height="22" rx="3" />
          <path d="M40 3l11.5 12L40 27.5 28.5 15z" strokeLinejoin="round" />
        </Icon>
        功能
      </NavItem>
      <NavItem>
        <Icon width="56" height="58" viewBox="0 0 56 58" stroke="#666" strokeWidth="2.6">
          <circle cx="28" cy="29" r="26.7" />
          <g fill="#666" stroke="none">
            <circle cx="16.5" cy="29" r="2.8" />
            <circle cx="28" cy="29" r="2.8" />
            <circle cx="39.5" cy="29" r="2.8" />
          </g>
        </Icon>
        设自选
      </NavItem>
    </BottomNav>

    <SystemNav>
      <Icon width="46" height="45" stroke="#a0a0a0" strokeWidth="5.5" strokeLinecap="round">
        <path d="M3 11h40M3 26h40M3 41h40" />
      </Icon>
      <Icon width="58" height="45" stroke="#a0a0a0" strokeWidth="5" strokeLinecap="round" strokeLinejoin="round" $left={218}>
        <path d="M3 24L29 4l26 20M11 28v10q0 4 4 4h28q4 0 4-4V28" />
      </Icon>
      <Icon width="48" height="45" stroke="#a0a0a0" strokeWidth="5.5" strokeLinecap="round" $left={232}>
        <path d="M13 4L4 11h38q4 0 4 4v23q0 4-4 4H12" />
      </Icon>
    </SystemNav>
  </Page>
);

export default App;
